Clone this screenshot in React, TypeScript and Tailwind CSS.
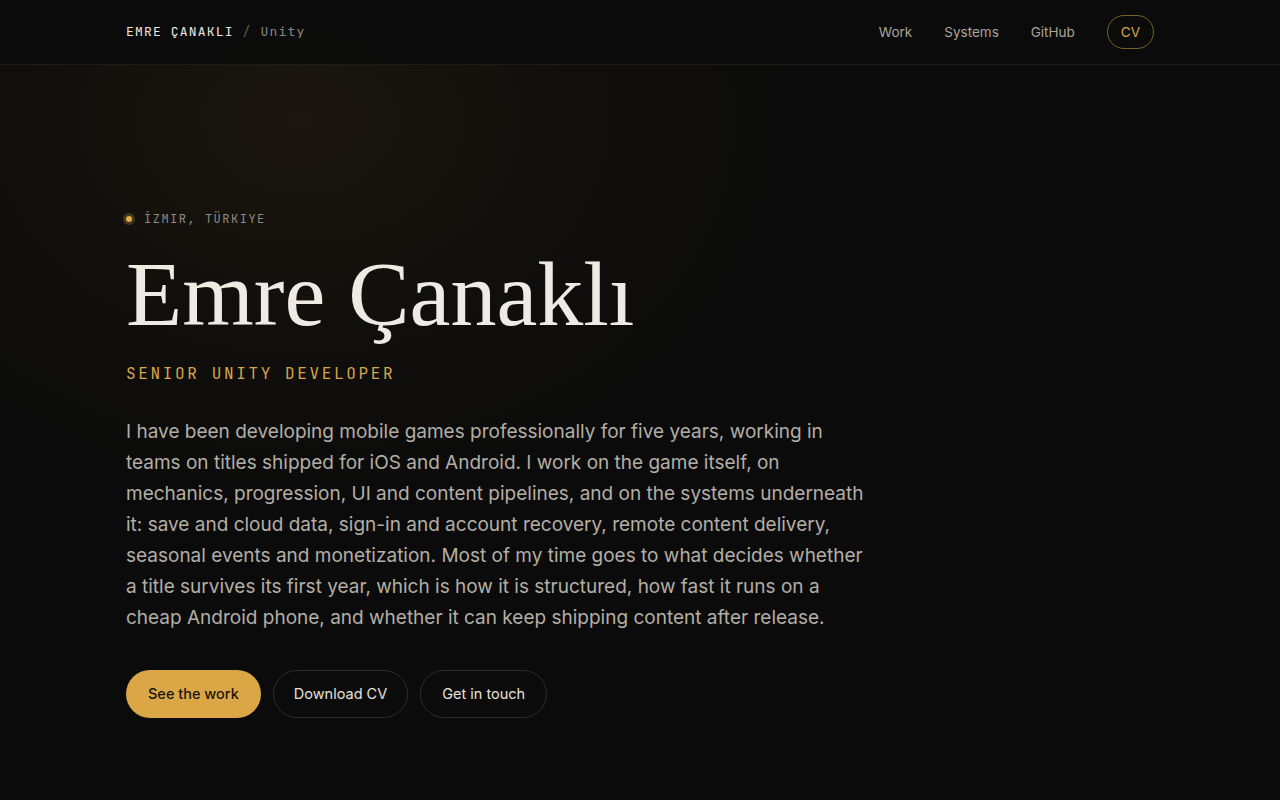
import { useState } from "react";

const mono = "font-['JetBrains_Mono','DejaVu_Sans_Mono','Liberation_Mono',monospace]";
const sans = "font-['Inter','Noto_Sans',sans-serif]";
const serif = "font-['Liberation_Serif','DejaVu_Serif',serif]";

export default function App() {
  const [active] = useState("work");

  return (
    <div className={`min-h-screen bg-[#0b0b0b] text-[#ece8e1] ${sans} relative overflow-hidden`}>
      {/* warm glow top-left */}
      <div className="pointer-events-none absolute left-[-200px] top-[-260px] h-[760px] w-[1000px] rounded-full bg-[radial-gradient(closest-side,rgba(120,90,40,0.15),rgba(120,90,40,0.05)_55%,transparent)]" />

      {/* HEADER */}
      <header className="relative z-10 border-b border-[#1e1c19] bg-[#0b0b0b]/90">
        <div className="mx-auto flex h-16 max-w-[1076px] items-center justify-between px-6">
          <div className={`${mono} text-[13px] tracking-[0.09em]`}>
            <span className="text-[#ece8e0]">EMRE ÇANAKLI</span>
            <span className="text-[#5f5b55]"> / </span>
            <span className="text-[#8c8780]">Unity</span>
          </div>
          <nav className="flex items-center gap-8 text-[13.5px] text-[#a9a49c]">
            <a className={active === "work" ? "text-[#a9a49c]" : ""}>Work</a>
            <a>Systems</a>
            <a>GitHub</a>
            <a className="flex h-[34px] items-center rounded-full border border-[#7a5e2a] px-[13px] text-[#d8a64a]">
              CV
            </a>
          </nav>
        </div>
      </header>

      {/* HERO */}
      <main className="relative z-10 mx-auto max-w-[1076px] px-6 pt-[146px]">
        <div className={`${mono} -ml-[3px] flex items-center gap-[9px] text-[12px] leading-4 tracking-[0.125em] text-[#8f8a83]`}>
          <span className="flex h-[12px] w-[12px] items-center justify-center rounded-full bg-[#d8a64a]/25">
            <span className="h-[6px] w-[6px] rounded-full bg-[#e0ac4c]" />
          </span>
          İZMIR, TÜRKIYE
        </div>

        <h1 className={`${serif} mt-[21px] text-[92px] leading-none font-normal text-[#efebe4]`}>
          Emre Çanaklı
        </h1>

        <div className={`${mono} mt-[22px] text-[16px] leading-6 tracking-[0.165em] text-[#d8a64a]`}>
          SENIOR UNITY DEVELOPER
        </div>

        <p className="mt-[30px] max-w-[742px] text-[19px] leading-[31px] text-[#b3aea6]">
          I have been developing mobile games professionally for five years, working in teams on titles
          shipped for iOS and Android. I work on the game itself, on mechanics, progression, UI and
          content pipelines, and on the systems underneath it: save and cloud data, sign-in and account
          recovery, remote content delivery, seasonal events and monetization. Most of my time goes to
          what decides whether a title survives its first year, which is how it is structured, how fast
          it runs on a cheap Android phone, and whether it can keep shipping content after release.
        </p>

        <div className="mt-[37px] flex items-center gap-3 text-[14.5px]">
          <a className="flex h-12 items-center rounded-full bg-[#dba746] px-[22px] font-medium text-[#1a140a]">
            See the work
          </a>
          <a className="flex h-12 items-center rounded-full border border-[#2e2c29] px-[20px] text-[#e6e2db]">
            Download CV
          </a>
          <a className="flex h-12 items-center rounded-full border border-[#2e2c29] px-[21px] text-[#e6e2db]">
            Get in touch
          </a>
        </div>
      </main>
    </div>
  );
}
